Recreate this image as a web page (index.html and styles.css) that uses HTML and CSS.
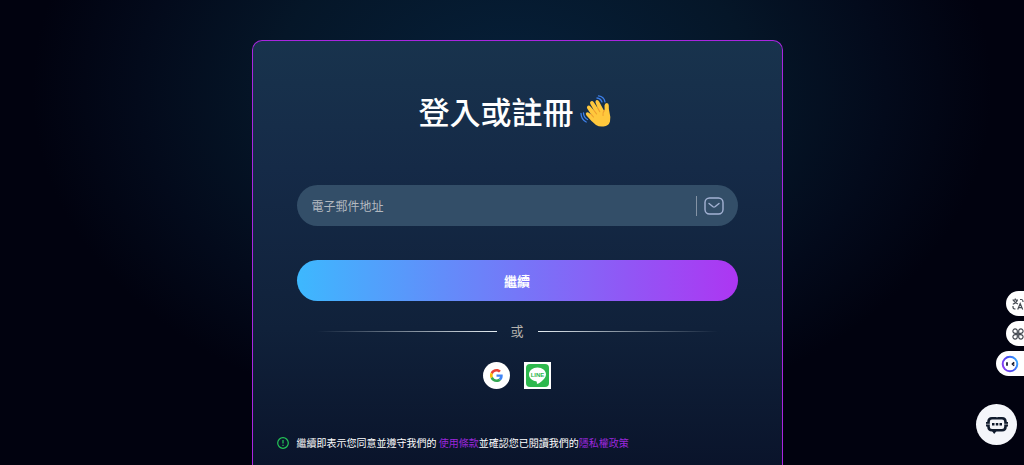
FILE: index.html
```html
<!DOCTYPE html>
<html lang="zh-Hant">
<head>
<meta charset="utf-8">
<meta name="viewport" content="width=device-width, initial-scale=1">
<title>登入或註冊</title>
<link rel="stylesheet" href="styles.css">
</head>
<body>
<main class="page">
  <form class="card">
    <h1 class="title">登入或註冊
      <svg class="wave" viewBox="0 0 32 32" aria-hidden="true">
        <path d="M16 30Q11 26 6.500 20.500Q5 18.500 6.500 17.500Q7.800 16.800 9.500 18.200L11 19.200L7.200 13.500Q6.300 11.600 7.800 10.700Q9.300 10 10.500 11.500L14 15.500L10.300 9Q9.500 7 11 6.200Q12.700 5.500 13.800 7.200L17.800 13.200L15.500 7.500Q15 5.500 16.600 5Q18.200 4.600 19.100 6.500L23.800 15.300Q24.700 15.500 24.600 14L24.500 10.500Q24.700 8 26.800 8Q28.800 8.200 28.800 10.500Q28.600 14 29.500 17.500Q31 22.500 30 26.500Q28.800 31 23.500 31.500Q19 32 16 30Z" fill="#ffc83d"/>
        <path d="M17.800 13.200l2 3.500M14 15.500l2.600 3.500M11 19.200l2.500 2.800M24.300 15.500q-2 2-1.300 5" fill="none" stroke="#ee9d2f" stroke-width="1.100" stroke-linecap="round"/>
        <path d="M17 3q3.500.3 5 4M18.500.8q5.500.7 6.500 6M3.500 18q.2 4.500 4 6.500M1 18.500q.2 6 5.200 8.500" fill="none" stroke="#3d7fe8" stroke-width="1.300" stroke-linecap="round"/>
      </svg>
    </h1>
    <div class="fields">
      <div class="field">
        <input class="field-input" type="email" placeholder="電子郵件地址" aria-label="電子郵件地址">
        <svg class="mail" viewBox="0 0 20 18" aria-hidden="true">
          <rect x="1" y="1" width="18" height="16" rx="4.500"/>
          <path d="M5 6.500l4 3.300q1 .7 2 0l4-3.300"/>
        </svg>
      </div>
      <button class="submit" type="submit">繼續</button>
      <div class="divider">或</div>
      <div class="social">
        <button class="google" type="button" aria-label="Google">
          <svg viewBox="0 0 48 48" aria-hidden="true">
            <path fill="#ea4335" d="M24 9.500c3.540 0 6.710 1.220 9.210 3.600l6.850-6.850C35.900 2.380 30.470 0 24 0 14.620 0 6.510 5.380 2.560 13.220l7.980 6.190C12.430 13.720 17.740 9.500 24 9.500z"/>
            <path fill="#4285f4" d="M46.980 24.550c0-1.570-.15-3.090-.38-4.550H24v9.020h12.940c-.58 2.960-2.260 5.480-4.780 7.180l7.730 6c4.510-4.180 7.090-10.360 7.090-17.650z"/>
            <path fill="#fbbc05" d="M10.530 28.590A14.500 14.500 0 0 1 10.530 19.410l-7.980-6.190a24 24 0 0 0 0 21.560z"/>
            <path fill="#34a853" d="M24 48c6.480 0 11.930-2.130 15.890-5.810l-7.730-6C30.010 37.640 27.240 38.500 24 38.500c-6.260 0-11.570-4.220-13.470-9.910l-7.980 6.190C6.510 42.620 14.620 48 24 48z"/>
          </svg>
        </button>
        <button class="line" type="button" aria-label="LINE">
          <svg viewBox="0 0 27 27" aria-hidden="true">
            <rect x="2" y="2" width="23" height="23" rx="4" fill="#2db84d"/>
            <path d="M13.500 5.500c-4.700 0-8.500 3-8.500 6.900 0 3.500 3 6.200 7.100 6.800 1.300.3.500 2.200.9 2.600.6.500 8.900-4.400 9-9.400 0-3.900-3.800-6.900-8.500-6.900z" fill="#fff"/>
            <text class="line-word" x="13.500" y="14.500" text-anchor="middle">LINE</text>
          </svg>
        </button>
      </div>
    </div>
    <p class="terms">
      <svg class="notice" viewBox="0 0 12 12" aria-hidden="true">
        <circle cx="6" cy="6" r="5.300"/><path d="M6 3v3.500M6 7.800v1.200"/>
      </svg>
      <span>繼續即表示您同意並遵守我們的 <a href="#terms">使用條款</a>並確認您已閱讀我們的<a href="#privacy">隱私權政策</a></span>
    </p>
  </form>
</main>
<aside class="tools">
  <button class="tool" type="button" aria-label="翻譯">
    <svg viewBox="0 0 12 12" aria-hidden="true">
      <path d="M.5 2h5.500M3.300.5V2M5.300 2Q4.500 5 .8 6.200M1.500 2.500Q2.800 5 6 6M8 1.500h1.500q1.500 0 1.500 2V4M1 8v1.200q0 1.800 2.500 1.800M5.700 11.500l2.500-6 2.500 6M6.500 9.600h3.400"/>
    </svg>
  </button>
  <button class="tool" type="button" aria-label="應用程式">
    <svg viewBox="0 0 12 12" aria-hidden="true">
      <path d="M5.300 5.300H3.200a2.200 2.200 0 1 1 2.100-2.200zM6.700 5.300h2.100a2.200 2.200 0 1 0-2.100-2.200zM5.300 6.700H3.200a2.200 2.200 0 1 0 2.100 2.200zM6.700 6.700h2.100a2.200 2.200 0 1 1-2.100 2.200z"/>
    </svg>
  </button>
  <button class="assistant" type="button" aria-label="助理">
    <svg viewBox="0 0 18 18" aria-hidden="true">
      <defs><linearGradient id="ring" x1="0" y1=".7" x2="1" y2=".3"><stop offset="0" stop-color="#8b3df5"/><stop offset=".5" stop-color="#4348f0"/><stop offset="1" stop-color="#35a6ff"/></linearGradient></defs>
      <circle cx="9" cy="9" r="7.300" fill="#fff" stroke="url(#ring)" stroke-width="2"/>
      <path d="M6 7.300v3.400M13.200 7.300l-1.700 1.700 1.700 1.700" fill="none" stroke="#15172c" stroke-width="1.700"/>
    </svg>
  </button>
</aside>
<button class="chat" type="button" aria-label="聊天">
  <svg viewBox="0 0 22 20" aria-hidden="true">
    <path d="M6 3.200h10q3.500 0 3.500 3.500v5q0 3.500-3.500 3.500H6q-3.500 0-3.500-3.500v-5q0-3.500 3.500-3.500z" fill="none" stroke="#101b2c" stroke-width="2.600"/>
    <path d="M6 16h4.500L8.200 19z" fill="#101b2c"/>
    <path d="M1 7v4.500M21 7v4.500" stroke="#101b2c" stroke-width="2"/>
    <path d="M0 9.200h4M18 9.200h4M11 1.500v1.200" stroke="#f4f6fa" stroke-width=".6"/>
    <path d="M6 8h2.500v2.500H6zM9.800 8h2.500v2.500H9.800zM13.500 8H16v2.500h-2.500z" fill="#101b2c"/>
  </svg>
</button>
</body>
</html>
```
FILE: styles.css
```css
* { box-sizing: border-box; }

body {
  margin: 0;
  color: #fff;
  font-family: "Noto Sans CJK TC", sans-serif;
  background: radial-gradient(ellipse 480px 340px at 50% 90px, #06203a 0%, #051628 50%, #030a1b 78%, #01020f 100%) #01020f;
}

button { padding: 0; border: 0; cursor: pointer; font-family: inherit; }
svg { display: block; }

.page {
  display: flex;
  justify-content: center;
  min-height: 100vh;
  padding: 40px 16px 0 26px;
}

.card {
  width: 100%;
  max-width: 531px;
  padding: 48px 24px 0;
  border: 1px solid #a925e0;
  border-bottom: 0;
  border-radius: 10px 10px 0 0;
  background: linear-gradient(#18334d, #152a47 30%, #10213a 68%, #0a142b);
}

.title {
  display: flex;
  align-items: center;
  justify-content: center;
  gap: 6px;
  margin: 0;
  padding-right: 4px;
  font-size: 31px;
  font-weight: 500;
  line-height: 44px;
}

.wave { width: 32px; height: 32px; }

.fields { padding: 52px 20px 0; }

.field {
  display: flex;
  align-items: center;
  height: 41px;
  padding: 0 14px 0 15px;
  border-radius: 21px;
  background: #334e68;
}

.field-input {
  flex: 1;
  min-width: 0;
  height: 20px;
  padding: 0;
  border: 0;
  border-right: 1px solid #8493a5;
  outline: 0;
  background: transparent;
  color: #fff;
  font-family: inherit;
  font-size: 12px;
  line-height: 18px;
}

.field-input::placeholder { color: #b3b9c0; opacity: 1; }

.mail {
  width: 20px;
  height: 18px;
  margin-left: 7px;
  fill: none;
  stroke: #a4b2d4;
  stroke-width: 1.4;
  stroke-linecap: round;
}

.submit {
  display: block;
  width: 100%;
  height: 41px;
  margin-top: 34px;
  border-radius: 21px;
  background: linear-gradient(90deg, #3db8fe, #ad36f2);
  color: #fff;
  font-size: 13px;
  font-weight: 700;
}

.divider {
  display: flex;
  align-items: center;
  gap: 14px;
  margin: 20px 20px 0;
  color: #b5b2ad;
  font-size: 13px;
  line-height: 20px;
}

.divider::before,
.divider::after {
  content: "";
  flex: 1;
  height: 1px;
  background: linear-gradient(90deg, transparent, #e5edf2);
}

.divider::after { background: linear-gradient(270deg, transparent, #e5edf2); }

.social {
  display: flex;
  justify-content: center;
  gap: 14px;
  margin-top: 21px;
}

.google,
.line {
  display: grid;
  place-items: center;
  width: 27px;
  height: 27px;
  background: #fff;
}

.google { border-radius: 50%; }
.google svg { width: 13px; height: 13px; }
.line svg { width: 27px; height: 27px; }

.line-word {
  fill: #2db84d;
  font-family: "Liberation Sans", sans-serif;
  font-size: 6px;
  font-weight: 700;
}

.terms {
  display: flex;
  align-items: center;
  gap: 8px;
  margin: 45px 0 0;
  font-size: 10px;
  line-height: 18px;
}

.terms a { color: #9b27dc; text-decoration: none; }

.notice {
  flex: none;
  width: 12px;
  height: 12px;
  fill: none;
  stroke: #24c657;
  stroke-width: 1.2;
}

.tools {
  position: fixed;
  right: 0;
  top: 291px;
  display: flex;
  flex-direction: column;
  align-items: flex-end;
  gap: 5px;
}

.tool {
  display: flex;
  align-items: center;
  width: 18px;
  height: 25px;
  padding-left: 6px;
  overflow: hidden;
  border-radius: 13px 0 0 13px;
  background: #fff;
}

.tool svg {
  flex: none;
  width: 12px;
  height: 12px;
  fill: none;
  stroke: #454a52;
  stroke-width: 1.2;
}

.assistant {
  width: 28px;
  height: 25px;
  padding-left: 5px;
  border-radius: 13px 0 0 13px;
  background: #fff;
}

.assistant svg { width: 18px; height: 18px; }

.chat {
  position: fixed;
  right: 7px;
  bottom: 20px;
  display: grid;
  place-items: center;
  width: 41px;
  height: 41px;
  border-radius: 50%;
  background: #f4f6fa;
}

.chat svg { width: 22px; height: 20px; }
```
